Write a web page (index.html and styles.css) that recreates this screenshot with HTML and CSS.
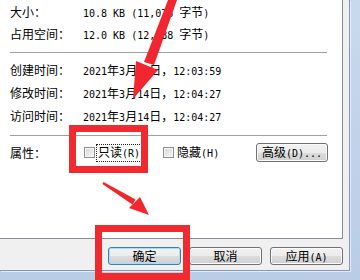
FILE: index.html
```html
<!DOCTYPE html>
<html lang="zh-CN">
<head>
    <meta charset="UTF-8">
    <title>文件属性</title>
    <link rel="stylesheet" href="styles.css">
</head>
<body>
<div class="screen">
    <div class="window">
        <div class="panel">
            <div class="row">
                <span class="label">大小：</span>
                <span class="value">10.8 KB (11,076 <span class="zh">字节</span>)</span>
            </div>
            <div class="row">
                <span class="label">占用空间：</span>
                <span class="value">12.0 KB (12,288 <span class="zh">字节</span>)</span>
            </div>

            <div class="sep"></div>

            <div class="row tall">
                <span class="label">创建时间：</span>
                <span class="value">2021<span class="zh">年</span>3<span class="zh">月</span>14<span class="zh">日，</span>12:03:59</span>
            </div>
            <div class="row tall">
                <span class="label">修改时间：</span>
                <span class="value">2021<span class="zh">年</span>3<span class="zh">月</span>14<span class="zh">日，</span>12:04:27</span>
            </div>
            <div class="row tall">
                <span class="label">访问时间：</span>
                <span class="value">2021<span class="zh">年</span>3<span class="zh">月</span>14<span class="zh">日，</span>12:04:27</span>
            </div>

            <div class="sep last"></div>

            <div class="attrs">
                <span class="label">属性：</span>
                <label class="check">
                    <span class="box"></span>
                    <span class="text focus">只读<span class="en">(R)</span></span>
                </label>
                <label class="check hidden-attr">
                    <span class="box"></span>
                    <span class="text">隐藏<span class="en">(H)</span></span>
                </label>
                <button class="btn adv">高级<span class="en">(D)...</span></button>
            </div>
        </div>

        <div class="actions">
            <button class="btn default">确定</button>
            <button class="btn">取消</button>
            <button class="btn">应用<span class="en">(A)</span></button>
        </div>
    </div>

    <!-- red annotations -->
    <div class="mark mark-check"></div>
    <div class="mark mark-ok"></div>
    <svg class="arrows" width="360" height="280" viewBox="0 0 360 280">
        <polygon points="168,0 177,0 154,65 144,62"/>
        <polygon points="136,61 158,70 133,99"/>
        <polygon points="103.6,182 135.6,199.5 132.4,204.5 102.4,184"/>
        <polygon points="140,197 129,208 149,215"/>
    </svg>
</div>
</body>
</html>
```

FILE: styles.css
```css
body {
    margin: 0;
    width: 360px;
    height: 280px;
    overflow: hidden;
    font-family: "Noto Sans CJK SC", sans-serif;
    font-size: 12px;
    color: #000;
}
.screen {
    position: relative;
    width: 360px;
    height: 280px;
    background: linear-gradient(to bottom, #c9d9ed, #b9cde6);
}
.window {
    width: 349px;
    height: 270px;
    background: #f0f0f0;
    border-right: 1px solid #8497b0;
    border-bottom: 1px solid #8497b0;
    box-shadow: 1px 1px 0 #e2ebf6;
}
.panel {
    width: 332px;
    height: 238px;
    padding-left: 10px;
    background: #fff;
    border-right: 1px solid #898c95;
    border-bottom: 1px solid #898c95;
}
.row {
    display: grid;
    grid-template-columns: 73px auto;
    align-items: center;
    height: 22px;
}
.row.tall {
    height: 23px;
}
.label {
    white-space: nowrap;
}
.value, .en {
    font-family: "DejaVu Sans Mono", monospace;
    font-size: 10px;
    white-space: nowrap;
}
.zh {
    font-family: "Noto Sans CJK SC", sans-serif;
    font-size: 12px;
}
.sep {
    width: 317px;
    height: 1px;
    background: #a0a0a0;
    margin: 8px 0 5px;
}
.sep.last {
    margin-bottom: 7px;
}
.attrs {
    display: flex;
    align-items: center;
    height: 19px;
}
.attrs .label {
    width: 73px;
}
.check {
    display: flex;
    align-items: center;
    gap: 2px;
    margin-left: 1px;
}
.hidden-attr {
    margin-left: 22px;
}
.box {
    width: 11px;
    height: 11px;
    box-sizing: border-box;
    border: 1px solid #8f8f8f;
    background: linear-gradient(135deg, #d4d6d9, #f7f7f7);
    box-shadow: inset 0 0 0 1px #f6f6f6;
}
.text {
    padding: 0 1px;
    line-height: 14px;
}
.focus {
    outline: 1px dotted #222;
}
.btn {
    width: 73px;
    height: 18px;
    padding: 0;
    font-family: "Noto Sans CJK SC", sans-serif;
    font-size: 12px;
    line-height: 16px;
    color: #000;
    border: 1px solid #707070;
    border-radius: 3px;
    background: linear-gradient(to bottom, #f2f2f2 0%, #ebebeb 50%, #dddddd 50%, #cfcfcf 100%);
    box-shadow: inset 0 0 0 1px #fbfbfb;
}
.btn.adv {
    width: 72px;
    height: 19px;
    margin-left: auto;
    margin-right: 14px;
}
.btn.default {
    border-color: #3c7fb1;
    box-shadow: inset 0 0 0 1px #a9dcf6;
}
.actions {
    display: flex;
    justify-content: flex-end;
    gap: 8px;
    padding: 8px 6px 0 0;
}
.mark {
    position: absolute;
    box-sizing: border-box;
    border: 7px solid #f02a2f;
}
.mark-check {
    left: 69px;
    top: 125px;
    width: 79px;
    height: 48px;
}
.mark-ok {
    left: 95px;
    top: 225px;
    width: 95px;
    height: 55px;
}
.arrows {
    position: absolute;
    left: 0;
    top: 0;
    fill: #f2262e;
}
```
